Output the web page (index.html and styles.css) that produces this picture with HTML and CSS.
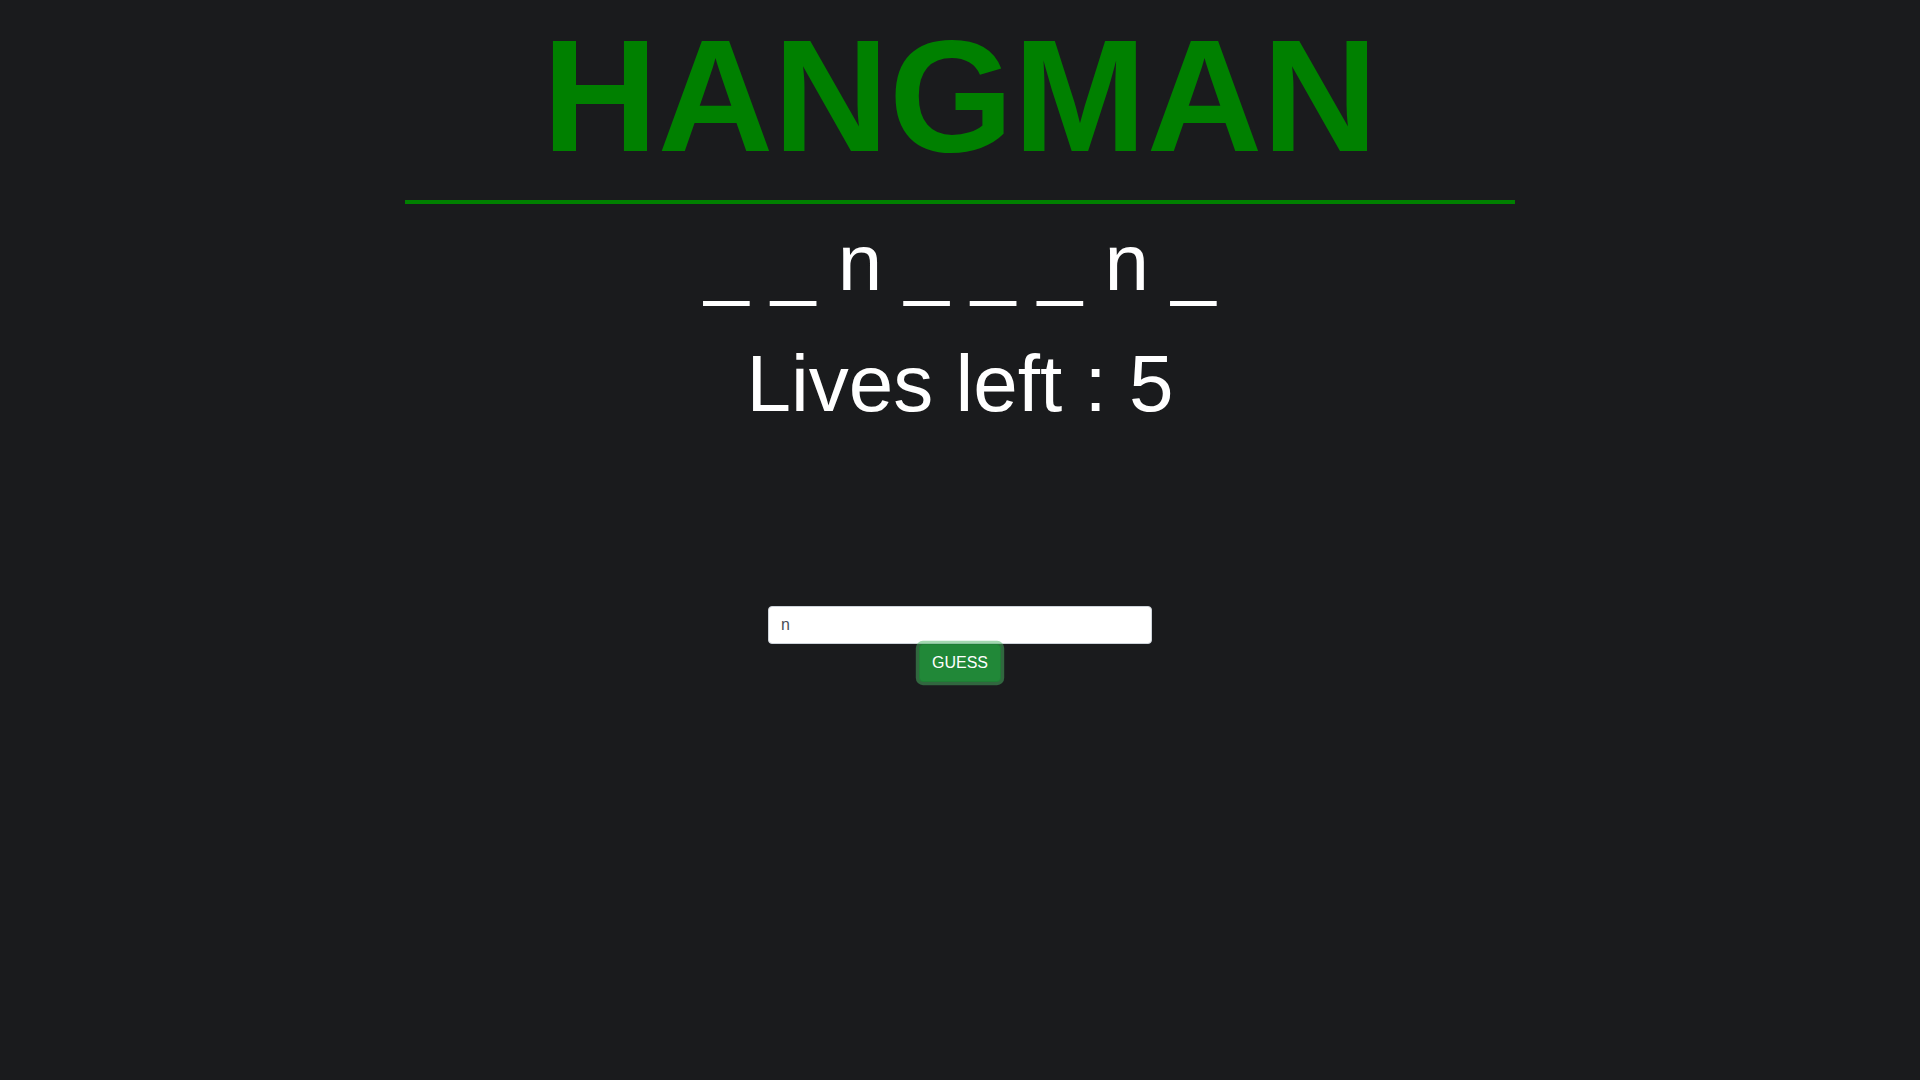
FILE: index.html
```html
<!DOCTYPE html>
<html lang="en">
<head>
<meta charset="utf-8">
<title>Hangman</title>
<link rel="stylesheet" href="styles.css">
</head>
<body>
<main class="game">
  <h1 class="title">HANGMAN</h1>
  <hr class="divider">
  <p class="word">_ _ n _ _ _ n _</p>
  <p class="lives">Lives left : 5</p>
  <form class="guess-form">
    <input class="guess-input" type="text" value="n">
    <button class="guess-btn" type="button">GUESS</button>
  </form>
</main>
</body>
</html>
```

FILE: styles.css
```css
html, body {
  margin: 0;
  padding: 0;
}

body {
  background: #1a1b1d;
  font-family: "Liberation Sans", Arial, sans-serif;
  color: #ffffff;
  min-height: 1080px;
}

.game {
  display: flex;
  flex-direction: column;
  align-items: center;
}

.title {
  margin: 0;
  padding-top: 4px;
  font-size: 160px;
  line-height: 184px;
  font-weight: 700;
  color: #008000;
}

.divider {
  width: 1110px;
  height: 0;
  margin: 12px 0 0;
  border: 0;
  border-top: 4px solid #008000;
}

.word {
  margin: 13px 0 0;
  font-size: 80px;
  line-height: 92px;
  white-space: pre;
}

.lives {
  margin: 29px 0 0;
  font-size: 80px;
  line-height: 92px;
}

.guess-form {
  margin-top: 176px;
  display: flex;
  flex-direction: column;
  align-items: center;
}

.guess-input {
  box-sizing: border-box;
  width: 384px;
  height: 38px;
  padding: 6px 12px;
  font-family: "Liberation Sans", Arial, sans-serif;
  font-size: 16px;
  line-height: 24px;
  color: #495057;
  background: #ffffff;
  border: 1px solid #ced4da;
  border-radius: 4px;
  outline: none;
}

.guess-btn {
  box-sizing: border-box;
  height: 38px;
  padding: 6px 12px;
  font-family: "Liberation Sans", Arial, sans-serif;
  font-size: 16px;
  line-height: 24px;
  color: #ffffff;
  background: #218838;
  border: 1px solid #1e7e34;
  border-radius: 4px;
  box-shadow: 0 0 0 3.2px rgba(72, 180, 97, 0.5);
  cursor: pointer;
}
```
